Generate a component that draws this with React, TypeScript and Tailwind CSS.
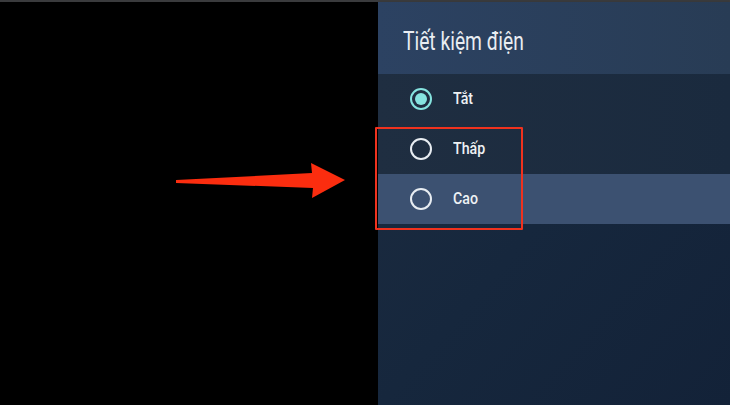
import React from 'react';

interface OptionRowProps {
  label: string;
  selected?: boolean;
  focused?: boolean;
}

const OptionRow = ({ label, selected = false, focused = false }: OptionRowProps) => (
  <div className={`flex items-center h-[50px] pl-[32px] ${focused ? 'bg-[#3c5171]' : ''}`}>
    <div className="shrink-0 w-[43px] flex items-center">
      <div
        className={`w-[22px] h-[22px] rounded-full border-[2.5px] flex items-center justify-center ${
          selected ? 'border-[#86e3df]' : 'border-[#e8edf2]'
        }`}
      >
        {selected && <div className="w-[12px] h-[12px] rounded-full bg-[#86e3df]" />}
      </div>
    </div>
    <span className="block origin-left scale-x-[0.86] text-[16.5px] font-medium text-[#eef1f4] mt-[1px]">
      {label}
    </span>
  </div>
);

export default function App() {
  return (
    <div
      className="relative w-[730px] h-[405px] overflow-hidden bg-black flex flex-col"
      style={{ fontFamily: 'Roboto, "Noto Sans", sans-serif' }}
    >
      {/* top gray strip */}
      <div className="h-[2px] bg-[#3a3b3d] shrink-0" />

      <div className="flex flex-1">
        {/* black screen area */}
        <div className="w-[378px] shrink-0 bg-black" />

        {/* settings side panel */}
        <div className="flex-1 flex flex-col bg-gradient-to-br from-[#1d2c40] via-[#16273d] to-[#132238]">
          <div className="h-[72px] bg-gradient-to-r from-[#2c4262] to-[#283c55] flex items-center pl-[25px] shadow-[0_2px_3px_rgba(0,0,0,0.45)]">
            <h1 className="block origin-left scale-x-[0.77] text-[25px] text-[#e9edf2] mt-[7px]">
              Tiết kiệm điện
            </h1>
          </div>
          <div className="bg-gradient-to-r from-[#1f2e41] to-[#1a2a3e]">
            <OptionRow label="Tắt" selected />
            <OptionRow label="Thấp" />
          </div>
          <OptionRow label="Cao" focused />
        </div>
      </div>

      {/* annotation: red box around options */}
      <div className="absolute left-[375px] top-[127px] w-[148px] h-[103px] border-[2.5px] border-[#f0321e] rounded-[1px]" />

      {/* annotation: red arrow */}
      <svg className="absolute left-[170px] top-[158px]" width="185" height="45" viewBox="0 0 185 45">
        <path d="M6 22 L142 15 L141 5 L175 22 L142 40 L143 30 L6 25 Z" fill="#fb2d0f" />
      </svg>
    </div>
  );
}
